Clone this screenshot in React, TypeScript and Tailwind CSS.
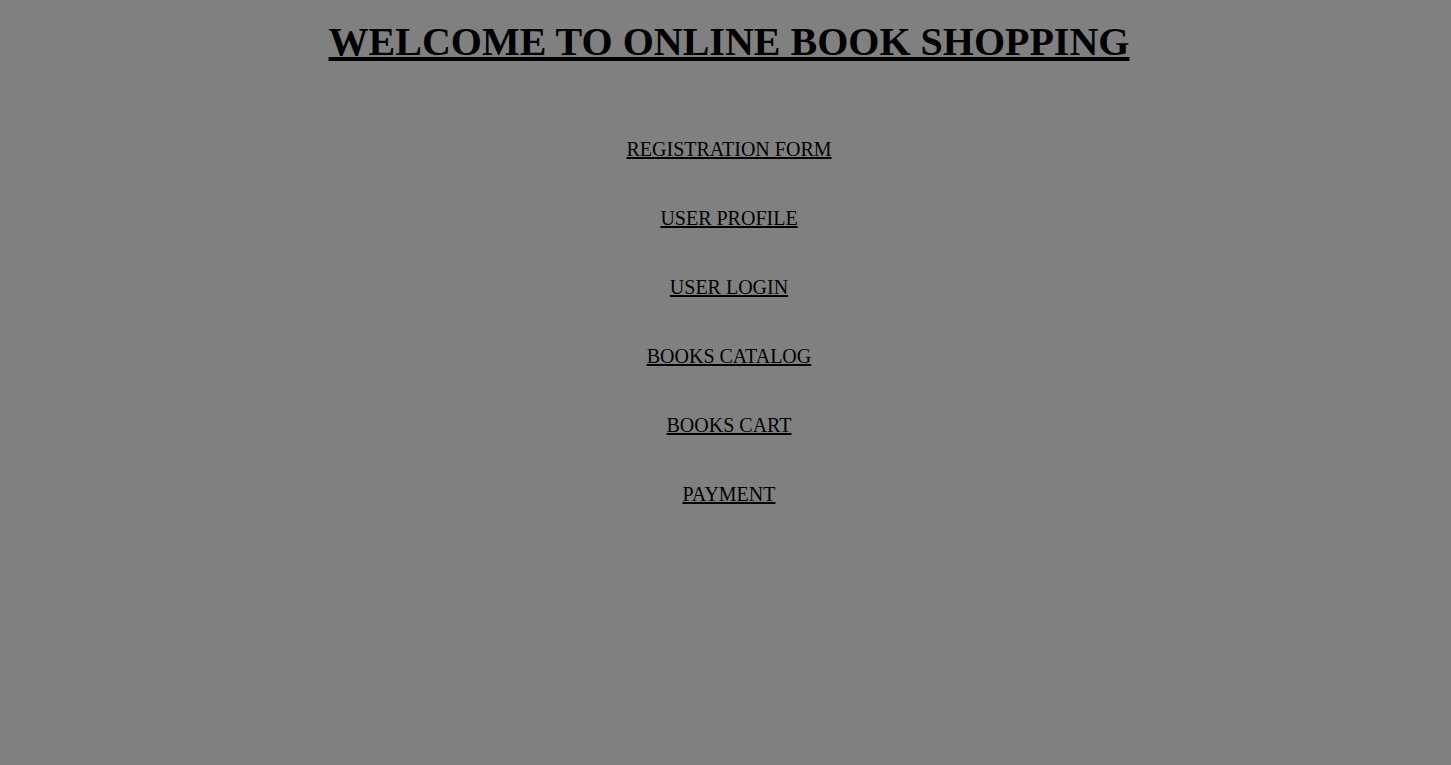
export default function App() {
  const links = [
    "REGISTRATION FORM",
    "USER PROFILE",
    "USER LOGIN",
    "BOOKS CATALOG",
    "BOOKS CART",
    "PAYMENT",
  ];
  return (
    <div
      className="min-h-[765px] w-full bg-[#808080] text-black"
      style={{ fontFamily: '"Liberation Serif", "Times New Roman", serif' }}
    >
      <div className="flex flex-col items-center pl-[7px] pt-[19px]">
        <h1 className="text-[40px] font-bold leading-[46px] underline">
          WELCOME TO ONLINE BOOK SHOPPING
        </h1>
        <div className="mt-[73px] flex flex-col items-center gap-[46px]">
          {links.map((l) => (
            <a
              key={l}
              href="#"
              className="text-[20px] leading-[23px] text-black underline"
            >
              {l}
            </a>
          ))}
        </div>
      </div>
    </div>
  );
}
